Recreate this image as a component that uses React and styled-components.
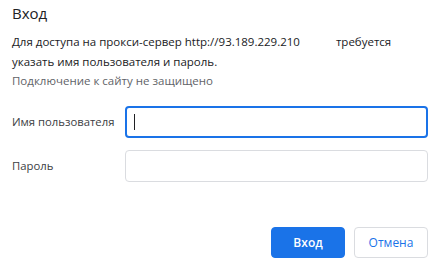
import React from 'react'
import styled, { createGlobalStyle } from 'styled-components'

const GlobalStyle = createGlobalStyle`
  html, body {
    margin: 0;
    padding: 0;
    background: #fff;
  }
  body {
    font-family: "Open Sans", "Noto Sans", sans-serif;
    color: #202124;
  }
`

const Dialog = styled.div`
  width: 439px;
  height: 267px;
  box-sizing: border-box;
  padding: 3px 11px 9px 12px;
  display: flex;
  flex-direction: column;
  background: #fff;
`

const Title = styled.h1`
  margin: 0;
  font-size: 15px;
  font-weight: 400;
  line-height: 20px;
  color: #202124;
`

const Message = styled.p`
  margin: 9px 0 0;
  font-size: 11.5px;
  line-height: 19.5px;
  color: ${(p) => (p.muted ? '#5f6368' : '#202124')};
  & + & {
    margin-top: 0;
  }
`

const Hidden = styled.span`
  display: inline-block;
  width: 33px;
`

const Form = styled.div`
  margin-top: 15px;
  display: grid;
  grid-template-columns: 113px 1fr;
  row-gap: 12px;
  align-items: center;
`

const Label = styled.label`
  font-size: 11.3px;
  color: #3c4043;
`

const Input = styled.input`
  box-sizing: border-box;
  height: 32px;
  width: 100%;
  margin: 0;
  padding: 0 8px;
  border: ${(p) => (p.focused ? '2px solid #1a73e8' : '1px solid #dadce0')};
  border-radius: 4px;
  outline: none;
  background: #fff;
  font: inherit;
  font-size: 12px;
`

const FakeField = styled.div`
  box-sizing: border-box;
  height: 32px;
  border: ${(p) => (p.focused ? '2px solid #1a73e8' : '1px solid #dadce0')};
  border-radius: 4px;
  display: flex;
  align-items: center;
  padding-left: ${(p) => (p.focused ? '7px' : '8px')};
`

const Caret = styled.span`
  width: 1px;
  height: 16px;
  background: #202124;
`

const Actions = styled.div`
  margin-top: auto;
  display: flex;
  justify-content: flex-end;
  gap: 9px;
`

const Button = styled.button`
  box-sizing: border-box;
  width: 74px;
  height: 31px;
  border-radius: 4px;
  font-family: inherit;
  font-size: 12px;
  font-weight: ${(p) => (p.primary ? 600 : 500)};
  cursor: pointer;
  background: ${(p) => (p.primary ? '#1a73e8' : '#fff')};
  color: ${(p) => (p.primary ? '#fff' : '#1a73e8')};
  border: ${(p) => (p.primary ? '1px solid #1a73e8' : '1px solid #dadce0')};
`

export default function App() {
  return (
    <>
      <GlobalStyle />
      <Dialog>
        <Title>Вход</Title>
        <Message>
          Для доступа на прокси-сервер http://93.189.229.210
          <Hidden /> требуется
          <br />
          указать имя пользователя и пароль.
        </Message>
        <Message muted>Подключение к сайту не защищено</Message>
        <Form>
          <Label>Имя пользователя</Label>
          <FakeField focused>
            <Caret />
          </FakeField>
          <Label>Пароль</Label>
          <Input type="password" />
        </Form>
        <Actions>
          <Button primary>Вход</Button>
          <Button>Отмена</Button>
        </Actions>
      </Dialog>
    </>
  )
}
